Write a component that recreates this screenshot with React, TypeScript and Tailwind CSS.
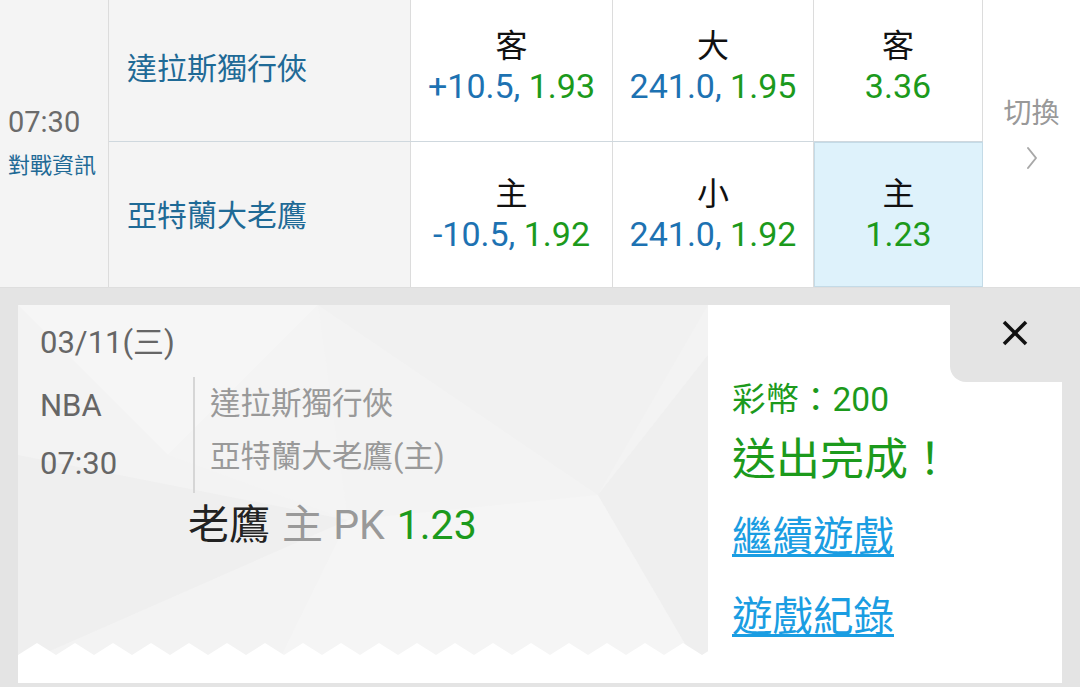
import React from 'react';

type Part = { text: string; color: string };

const BLUE = 'text-[#1d72b2]';
const GREEN = 'text-[#1c9a1c]';

const ChevronRight = () => (
  <svg width="12" height="24" viewBox="0 0 12 24" fill="none">
    <polyline points="2,2 10,12 2,22" stroke="#a8a8a8" strokeWidth="2" strokeLinecap="round" strokeLinejoin="round" />
  </svg>
);

const CloseIcon = () => (
  <svg width="28" height="28" viewBox="0 0 28 28" fill="none">
    <line x1="3" y1="3" x2="25" y2="25" stroke="#111" strokeWidth="3.5" />
    <line x1="25" y1="3" x2="3" y2="25" stroke="#111" strokeWidth="3.5" />
  </svg>
);

function OddsCell({ label, parts, width, selected, last }: { label: string; parts: Part[]; width: string; selected?: boolean; last?: boolean }) {
  return (
    <div
      className={`${width} h-full flex flex-col items-center justify-center ${last ? 'pb-[1px]' : 'pb-2'} border-r ${
        selected ? 'bg-[#def2fb] border-[#c4dbe7] border-l border-t border-b' : 'bg-white border-[#dcdcdc]'
      }`}
    >
      <div className="text-[32px] leading-[40px] text-[#111]">{label}</div>
      <div className="text-[34px] leading-[40px] whitespace-nowrap">
        {parts.map((p, i) => (
          <span key={i} className={p.color}>{p.text}</span>
        ))}
      </div>
    </div>
  );
}

function MatchRow({ team, cells, last }: { team: string; cells: { label: string; parts: Part[]; selected?: boolean }[]; last?: boolean }) {
  const widths = ['w-[202px]', 'w-[201px]', 'w-[169px]'];
  return (
    <div className={`flex ${last ? 'h-[146px]' : 'h-[142px] border-b border-[#cfd8de]'}`}>
      <div
        className={`w-[302px] h-full bg-[#f4f4f4] border-r border-[#dcdcdc] flex items-center pl-[18px] ${
          last ? 'pt-[2px]' : 'pb-1'
        } text-[30px] text-[#1f6a96]`}
      >
        {team}
      </div>
      {cells.map((c, i) => (
        <OddsCell key={i} label={c.label} parts={c.parts} width={widths[i]} selected={c.selected} last={last} />
      ))}
    </div>
  );
}

function zigzag() {
  const pts: string[] = ['0,378', '0,350'];
  for (let x = 0; x < 700; x += 38) {
    pts.push(`${x + 19},338`);
    pts.push(`${x + 38},350`);
  }
  pts.push('690,350', '690,378');
  return pts.join(' ');
}

const CardPattern = () => (
  <svg className="absolute inset-0" width="690" height="378" viewBox="0 0 690 378">
    <rect width="690" height="378" fill="#f3f3f3" />
    <polygon points="0,0 300,0 150,150" fill="#f6f6f6" />
    <polygon points="300,0 690,0 580,190" fill="#f1f1f1" />
    <polygon points="0,150 330,215 0,360" fill="#efefef" />
    <polygon points="330,215 580,190 690,378 250,378" fill="#f5f5f5" />
    <polygon points="580,190 690,50 690,378" fill="#efefef" />
    <polygon points="150,150 330,215 300,0" fill="#f4f4f4" />
    <polygon points={zigzag()} fill="#ffffff" />
  </svg>
);

export default function App() {
  return (
    <div
      className="w-[1080px] h-[687px] overflow-hidden bg-[#e4e4e4]"
      style={{ fontFamily: "Roboto, 'Noto Sans CJK TC', sans-serif" }}
    >
      {/* odds table */}
      <div className="flex h-[288px] bg-white border-b border-[#dedede]">
        <div className="w-[109px] h-full bg-[#f4f4f4] border-r border-[#dcdcdc] flex flex-col justify-center pl-[8px]">
          <div className="text-[29px] leading-[44px] text-[#6b6b6b]">07:30</div>
          <div className="text-[22px] leading-[44px] text-[#1f6a96]">對戰資訊</div>
        </div>
        <div className="flex flex-col">
          <MatchRow
            team="達拉斯獨行俠"
            cells={[
              { label: '客', parts: [{ text: '+10.5, ', color: BLUE }, { text: '1.93', color: GREEN }] },
              { label: '大', parts: [{ text: '241.0, ', color: BLUE }, { text: '1.95', color: GREEN }] },
              { label: '客', parts: [{ text: '3.36', color: GREEN }] },
            ]}
          />
          <MatchRow
            last
            team="亞特蘭大老鷹"
            cells={[
              { label: '主', parts: [{ text: '-10.5, ', color: BLUE }, { text: '1.92', color: GREEN }] },
              { label: '小', parts: [{ text: '241.0, ', color: BLUE }, { text: '1.92', color: GREEN }] },
              { label: '主', parts: [{ text: '1.23', color: GREEN }], selected: true },
            ]}
          />
        </div>
        <div className="flex-1 h-full flex flex-col items-center justify-center pb-[24px]">
          <div className="text-[28px] leading-[40px] text-[#999]">切換</div>
          <div className="mt-[12px]">
            <ChevronRight />
          </div>
        </div>
      </div>

      {/* bet slip */}
      <div className="pt-[17px] px-[18px]">
        <div className="flex h-[378px]">
          <div className="relative w-[690px] h-full">
            <CardPattern />
            <div className="relative pl-[22px] pt-[18px]">
              <div className="text-[31px] leading-[40px] text-[#666]">03/11(三)</div>
              <div className="flex mt-[14px]">
                <div className="w-[153px] flex flex-col text-[31px] text-[#666]">
                  <div className="h-[58px] flex items-center">NBA</div>
                  <div className="h-[58px] flex items-center">07:30</div>
                </div>
                <div className="border-l-2 border-[#d6d6d6] pl-[15px] flex flex-col text-[30.5px] text-[#999]">
                  <div className="h-[53px] flex items-center">達拉斯獨行俠</div>
                  <div className="h-[53px] flex items-center">亞特蘭大老鷹(主)</div>
                </div>
              </div>
              <div className="pl-[148px] mt-[8px] h-[50px] flex items-center text-[41px] whitespace-nowrap">
                <span className="text-[#222]">老鷹</span>
                <span className="text-[#999] ml-[12px]">主 PK</span>
                <span className={`${GREEN} ml-[12px]`}>1.23</span>
              </div>
            </div>
          </div>
          <div className="relative flex-1 h-full bg-white pl-[24px] pt-[73px]">
            <div className="absolute top-0 right-[-18px] w-[130px] h-[77px] bg-[#e4e4e4] rounded-bl-[16px] flex items-center justify-center pb-[21px]">
              <CloseIcon />
            </div>
            <div className={`h-[44px] flex items-center text-[33.5px] ${GREEN}`}>彩幣：200</div>
            <div className={`h-[76px] flex items-center text-[44px] ${GREEN}`}>送出完成！</div>
            <div className="h-[78px] flex items-center">
              <a className="text-[40.5px] leading-[48px] text-[#1a9de2] underline decoration-[3px] underline-offset-[3px]">繼續遊戲</a>
            </div>
            <div className="h-[82px] flex items-center">
              <a className="text-[40.5px] leading-[48px] text-[#1a9de2] underline decoration-[3px] underline-offset-[3px]">遊戲紀錄</a>
            </div>
          </div>
        </div>
      </div>
    </div>
  );
}
